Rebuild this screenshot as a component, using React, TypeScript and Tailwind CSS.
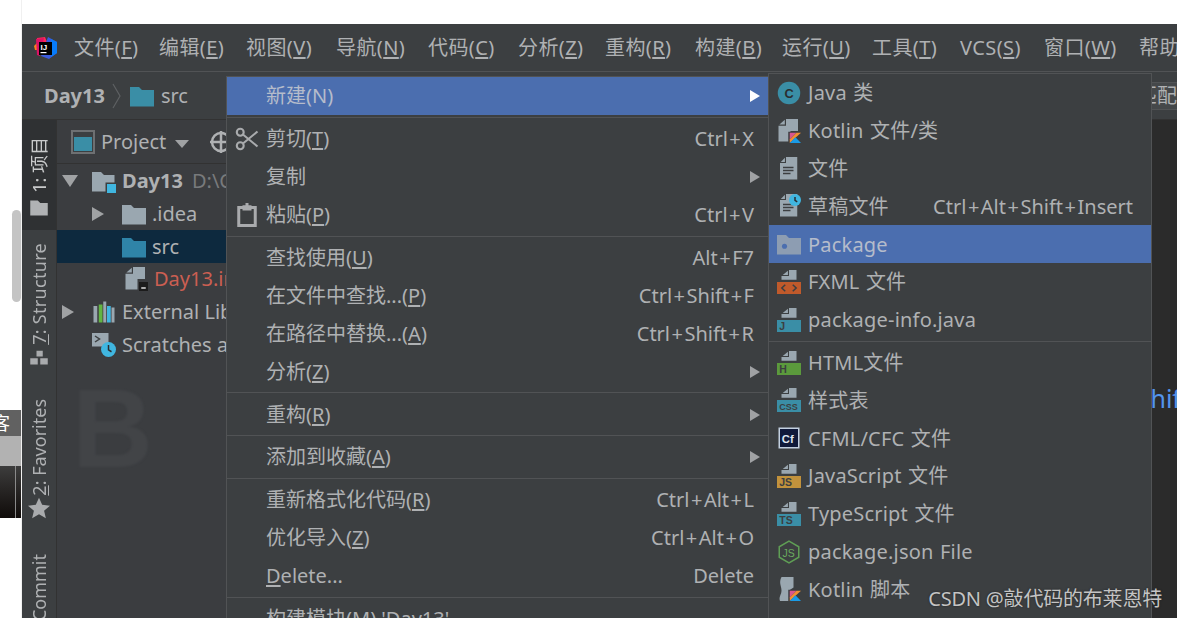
import type { ReactNode } from "react";

const FONT = "font-['Noto_Sans','Noto_Sans_CJK_SC',sans-serif]";
const GRAY = "#9aa7b0";

function Ico({ children, className = "" }: { children: ReactNode; className?: string }) {
  return (
    <svg viewBox="0 0 16 16" className={`h-6 w-6 shrink-0 ${className}`}>
      {children}
    </svg>
  );
}

const DocLines = () => (
  <>
    <path d="M6 0h7.5v15H2V4h4z" fill={GRAY} />
    <path d="M5.3 0.5v2.8H2.5z" fill={GRAY} />
    <path d="M4 6.5h7v1H4z M4 8.5h7v1H4z M4 10.5h5v1H4z" fill="#3c3f41" />
  </>
);
const SplitDoc = () => (
  <>
    <path d="M6 0h8v8H9v7H1V4.500h5z" fill={GRAY} />
    <path d="M5.200 0.500v3.200H1.600z" fill={GRAY} />
  </>
);
const KotlinBadge = () => (
  <>
    <path d="M7.500 8.500h8.500l-3.500 3.700 3.500 3.800H7.500z" fill="#3c3f41" />
    <path d="M8.500 9.200h4.500l-4.500 4.500z" fill="#d9568f" />
    <path d="M13 9.200h3l-7.500 6.800v-2.300z" fill="#f18e33" />
    <path d="M8.500 16l3.800-3.800 3.700 3.800z" fill="#1a9be6" />
  </>
);
const TypedFile = ({ color, label, size = 7 }: { color: string; label: string; size?: number }) => (
  <>
    <path d="M8 0h5v6.500H3V4h5z" fill={GRAY} />
    <path d="M7.300 0.500v2.800H3.800z" fill={GRAY} />
    <path d="M0 8h16v8H0z" fill={color} />
    <text x="1.500" y="14.700" fontSize={size} fontFamily="Liberation Sans" fontWeight="700" fill="#3c3f41">
      {label}
    </text>
  </>
);

const icons: Record<string, ReactNode> = {
  cut: (
    <Ico>
      <g fill="none" stroke="#a9abad" strokeWidth="1.400">
        <circle cx="3.500" cy="3.500" r="2.300" />
        <circle cx="3.500" cy="12.500" r="2.300" />
        <path d="M5.300 5L15 13 M5.300 11L15 3" />
      </g>
    </Ico>
  ),
  paste: (
    <Ico>
      <path d="M2.500 3h11v12h-11z" fill="none" stroke="#a9abad" strokeWidth="2" />
      <path d="M5 1.500h6V5H5z M7 0h2v2H7z" fill="#a9abad" />
    </Ico>
  ),
  java: (
    <Ico>
      <circle cx="8" cy="8" r="7.500" fill="#3a8ea6" />
      <text x="8" y="11" textAnchor="middle" fontSize="8.500" fontWeight="700" fontFamily="Liberation Sans" fill="#2b2d30">
        C
      </text>
    </Ico>
  ),
  kotlinFile: (
    <Ico>
      <SplitDoc />
      <KotlinBadge />
    </Ico>
  ),
  file: (
    <Ico>
      <DocLines />
    </Ico>
  ),
  scratch: (
    <Ico>
      <DocLines />
      <circle cx="12" cy="4" r="4" fill="#40b6e0" />
      <path d="M12 2v2.200l1.500 1" stroke="#2b2d30" strokeWidth="1" fill="none" />
    </Ico>
  ),
  pkg: (
    <Ico>
      <path d="M0 2h6l2 2h8v11H0z" fill="#8d9db2" />
      <circle cx="5" cy="9.500" r="1.700" fill="#4b6eaf" />
    </Ico>
  ),
  fxml: (
    <Ico>
      <TypedFile color="#c05a2b" label="" />
      <path d="M5.500 9.800L3.200 12l2.300 2.200 M10.500 9.800l2.300 2.200-2.300 2.200" fill="none" stroke="#3c3f41" strokeWidth="1" />
    </Ico>
  ),
  pinfo: (
    <Ico>
      <TypedFile color="#3a8ea6" label="J" />
    </Ico>
  ),
  html: (
    <Ico>
      <TypedFile color="#5b9a3c" label="H" />
    </Ico>
  ),
  css: (
    <Ico>
      <TypedFile color="#3a8ea6" label="CSS" size={6} />
    </Ico>
  ),
  cfml: (
    <Ico>
      <path d="M1 1h14v14H1z" fill="#c3d0e0" />
      <path d="M2 2h12v12H2z" fill="#101a3a" />
      <text x="3.200" y="11" fontSize="7.500" fontWeight="700" fontFamily="Liberation Sans" fill="#dfe6f0">
        Cf
      </text>
    </Ico>
  ),
  js: (
    <Ico>
      <TypedFile color="#c2923c" label="JS" />
    </Ico>
  ),
  ts: (
    <Ico>
      <TypedFile color="#3a8ea6" label="TS" />
    </Ico>
  ),
  node: (
    <Ico>
      <path d="M8 0.800l6.500 3.700v7L8 15.200 1.500 11.500v-7z" fill="none" stroke="#5f9e55" strokeWidth="1" />
      <text x="3.600" y="11" fontSize="7" fontFamily="Liberation Sans" fill="#6aab5f">
        JS
      </text>
    </Ico>
  ),
  kotlinScript: (
    <Ico>
      <path d="M3 0h8v7l-3 2v7H2c-1-3 1-4 1-7S1 4 3 0z" fill={GRAY} />
      <KotlinBadge />
    </Ico>
  ),
};

type Entry = { label: ReactNode; key?: string; arrow?: boolean; icon?: string; active?: boolean; sep?: boolean };
const M = ({ c }: { c: string }) => <u className="underline-offset-2">{c}</u>;

const mainItems: Entry[] = [
  { label: "新建(N)", arrow: true, active: true },
  { sep: true, label: "" },
  { label: <>剪切(<M c="T" />)</>, key: "Ctrl+X", icon: "cut" },
  { label: "复制", arrow: true },
  { label: <>粘贴(<M c="P" />)</>, key: "Ctrl+V", icon: "paste" },
  { sep: true, label: "" },
  { label: <>查找使用(<M c="U" />)</>, key: "Alt+F7" },
  { label: <>在文件中查找...(<M c="P" />)</>, key: "Ctrl+Shift+F" },
  { label: <>在路径中替换...(<M c="A" />)</>, key: "Ctrl+Shift+R" },
  { label: <>分析(<M c="Z" />)</>, arrow: true },
  { sep: true, label: "" },
  { label: <>重构(<M c="R" />)</>, arrow: true },
  { sep: true, label: "" },
  { label: <>添加到收藏(<M c="A" />)</>, arrow: true },
  { sep: true, label: "" },
  { label: <>重新格式化代码(<M c="R" />)</>, key: "Ctrl+Alt+L" },
  { label: <>优化导入(<M c="Z" />)</>, key: "Ctrl+Alt+O" },
  { label: <><M c="D" />elete...</>, key: "Delete" },
  { sep: true, label: "" },
  { label: "构建模块(M) 'Day13'" },
];

const subItems: Entry[] = [
  { label: "Java 类", icon: "java" },
  { label: "Kotlin 文件/类", icon: "kotlinFile" },
  { label: "文件", icon: "file" },
  { label: "草稿文件", icon: "scratch", key: "Ctrl+Alt+Shift+Insert" },
  { label: "Package", icon: "pkg", active: true },
  { label: "FXML 文件", icon: "fxml" },
  { label: "package-info.java", icon: "pinfo" },
  { sep: true, label: "" },
  { label: "HTML文件", icon: "html" },
  { label: "样式表", icon: "css" },
  { label: "CFML/CFC 文件", icon: "cfml" },
  { label: "JavaScript 文件", icon: "js" },
  { label: "TypeScript 文件", icon: "ts" },
  { label: "package.json File", icon: "node" },
  { label: "Kotlin 脚本", icon: "kotlinScript" },
];

const Arrow = ({ active }: { active?: boolean }) => (
  <span
    className={`h-0 w-0 border-y-[6px] border-l-[10px] border-y-transparent ${
      active ? "border-l-white" : "border-l-[#a0a2a4]"
    }`}
  />
);

// the + in shortcuts is wider in the reference font
function Shortcut({ value }: { value: string }) {
  const parts = value.split("+");
  return (
    <span className="whitespace-nowrap">
      {parts.map((p, i) => (
        <span key={i}>
          {i > 0 && <span className="mx-[1.500px]">+</span>}
          {p}
        </span>
      ))}
    </span>
  );
}

function MenuRow({ item }: { item: Entry }) {
  if (item.sep) return <div className="my-[2px] h-px shrink-0 bg-[#515355]" />;
  return (
    <div
      className={`relative flex h-[37.900px] shrink-0 items-center justify-between pl-[39px] pr-[8px] pt-[1px] ${
        item.active ? "bg-[#4b6eaf] text-[#b5bccb]" : ""
      }`}
    >
      {item.icon && <span className="absolute left-[8px] top-[7px]">{icons[item.icon]}</span>}
      <span className="whitespace-nowrap">{item.label}</span>
      {item.key && <span className="pr-[6px]"><Shortcut value={item.key} /></span>}
      {item.arrow && <Arrow active={item.active} />}
    </div>
  );
}

function SubRow({ item }: { item: Entry }) {
  if (item.sep) return <div className="my-[2px] h-px shrink-0 bg-[#515355]" />;
  return (
    <div
      className={`relative flex h-[37.800px] shrink-0 items-center justify-between pl-[39px] pr-[18px] pt-[1px] ${
        item.active ? "bg-[#4b6eaf] text-[#b5bccb]" : ""
      }`}
    >
      <span className="absolute left-[8px] top-[7px]">{item.icon && icons[item.icon]}</span>
      <span className="whitespace-nowrap tracking-[0.2px] [word-spacing:1px]">{item.label}</span>
      {item.key && <Shortcut value={item.key} />}
    </div>
  );
}

const topMenu: [string, string, number][] = [
  ["文件", "F", 85],
  ["编辑", "E", 87],
  ["视图", "V", 90],
  ["导航", "N", 92],
  ["代码", "C", 90],
  ["分析", "Z", 87],
  ["重构", "R", 90],
  ["构建", "B", 87],
  ["运行", "U", 90],
  ["工具", "T", 88],
  ["VCS", "S", 84],
  ["窗口", "W", 95],
];

const Tri = ({ className = "" }: { className?: string }) => (
  <span className={`h-0 w-0 border-y-[7px] border-l-[12px] border-y-transparent border-l-[#a0a2a4] ${className}`} />
);

function TreeRow({ pad, arrow, icon, children, selected }: { pad: number; arrow?: ReactNode; icon: ReactNode; children: ReactNode; selected?: boolean }) {
  return (
    <div className={`relative flex h-[32.700px] items-center whitespace-nowrap ${selected ? "bg-[#0d293e]" : ""}`}>
      {arrow && <span className="absolute top-1/2 flex -translate-y-1/2" style={{ left: pad - 30 }}>{arrow}</span>}
      <span className="shrink-0" style={{ marginLeft: pad }}>{icon}</span>
      <span className="ml-[6px]">{children}</span>
    </div>
  );
}

const Folder = ({ color }: { color: string }) => (
  <Ico>
    <path d="M0 2h6l2 2h8v11H0z" fill={color} />
  </Ico>
);

function VTab({ children, className = "" }: { children: ReactNode; className?: string }) {
  return (
    <span className={`rotate-180 whitespace-nowrap text-[18px] [text-orientation:sideways] [writing-mode:vertical-rl] ${className}`}>
      {children}
    </span>
  );
}

export default function App() {
  return (
    <div className={`flex h-[618px] w-[1177px] overflow-hidden bg-white text-[20px] leading-none text-[#afb1b3] ${FONT}`}>
      {/* bits of the browser page behind the IDE window */}
      <div className="flex w-[22px] shrink-0 flex-col border-r border-[#f0f0f0]">
        <div className="ml-[12px] mt-[210px] h-[92px] w-[9px] rounded-full bg-[#c4c4c4]" />
        <div className="mt-[108px] flex h-[26px] items-center overflow-hidden bg-[#616161] text-[18px] text-white">
          <span className="-ml-[8px]">客</span>
        </div>
        <div className="h-[30px] bg-[#b2b2b2]" />
        <div className="flex h-[52px] justify-end bg-gradient-to-b from-[#3d3d3d] to-[#100c0a] pr-[5px]">
          <div className="h-full w-px bg-[#8a8a8a]" />
        </div>
      </div>

      <div className="relative mt-[24px] flex min-w-0 flex-1 flex-col overflow-hidden bg-[#3c3f41]">
        {/* menu bar */}
        <div className="flex h-[48px] shrink-0 items-center border-b border-[#515355] pl-[11px]">
          <svg viewBox="0 0 24 24" className="h-6 w-6 shrink-0">
            <path d="M4 2l8-1 2 5H4z" fill="#fe2857" />
            <path d="M1 10l3-3 1 7H2z" fill="#fc801d" />
            <path d="M3 3l8-1-4 18-3-1z" fill="#dd1265" />
            <path d="M15 1l9 5v11l-8 6-8-3z" fill="#3b5bdb" />
            <path d="M18 3l6 3v11l-6 4z" fill="#087cfa" />
            <path d="M6 6h13v13H6z" fill="#000" />
            <text x="7.500" y="13.500" fontSize="8" fontWeight="700" fontFamily="Liberation Sans" fill="#fff">IJ</text>
            <path d="M7.500 16h6v1.200h-6z" fill="#fff" />
          </svg>
          <div className="ml-[17px] flex whitespace-nowrap">
            {topMenu.map(([t, k, w]) => (
              <span key={k + t} className="shrink-0 tracking-[0.4px]" style={{ width: w }}>
                {t}(<M c={k} />)
              </span>
            ))}
            <span className="shrink-0 tracking-[0.4px]">帮助(H)</span>
          </div>
        </div>

        {/* navigation bar */}
        <div className="flex h-[48px] shrink-0 items-center justify-between border-b border-[#323232] pl-[22px]">
          <div className="flex items-center">
            <span className="font-bold">Day13</span>
            <svg viewBox="0 0 10 26" className="ml-[7px] h-[26px] w-[10px]">
              <path d="M1 1l7 12-7 12" fill="none" stroke="#5e6163" strokeWidth="1.200" />
            </svg>
            <span className="ml-[8px]"><Folder color="#3a8ea6" /></span>
            <span className="ml-[7px]">src</span>
          </div>
          <span className="border-y border-l border-[#515355] bg-[#45484a] py-[3px]">匹配</span>
        </div>

        <div className="flex min-h-0 flex-1">
          {/* tool window strip */}
          <div className="flex w-[35px] shrink-0 flex-col items-center border-r border-[#323232]">
            <div className="flex h-[110px] w-full shrink-0 flex-col items-center bg-[#2f3133] pt-[17px] text-[#c8c9ca]">
              <VTab>1: 项目</VTab>
              <svg viewBox="0 0 16 16" className="mt-[5px] h-[20px] w-[20px] shrink-0">
                <path d="M1 2h6l2 2h6v10H1z" fill="#b0b2b4" />
              </svg>
            </div>
            <VTab className="mt-[13px] tracking-[0.3px]"><M c="7" />: Structure</VTab>
            <svg viewBox="0 0 16 16" className="mt-[2px] h-[20px] w-[20px] shrink-0">
              <path d="M6 3h5v4.500H6z M1 9h6v5H1z M9 9h6v5H9z" fill="#a9abad" />
            </svg>
            <VTab className="mt-[32px]"><M c="2" />: Favorites</VTab>
            <svg viewBox="0 0 16 16" className="mt-[2px] h-[22px] w-[22px] shrink-0">
              <path d="M8 0.500l2.300 5.200 5.700.6-4.300 3.700 1.300 5.500L8 12.600 3 15.500l1.300-5.500L0 6.300l5.700-.6z" fill="#a9abad" />
            </svg>
            <VTab className="mt-[35px]">Commit</VTab>
          </div>

          {/* project panel */}
          <div className="relative w-[169px] shrink-0 overflow-hidden bg-[#3b3d40]">
            <span className="absolute left-[15px] top-[253px] font-['Liberation_Sans'] text-[112px] font-bold text-[#424447] blur-[1px]">B</span>
            <div className="relative flex h-[44px] items-center border-b border-[#323232] pl-[14px] pt-[1px]">
              <svg viewBox="0 0 24 24" className="h-6 w-6 shrink-0">
                <path d="M0 0h24v24H0z" fill="#6e7072" />
                <path d="M2 2h20v20H2z" fill="#3c3f41" />
                <path d="M3 7h18v14H3z" fill="#3a8ea6" />
              </svg>
              <span className="ml-[6px]">Project</span>
              <span className="ml-[9px] mt-[3px] h-0 w-0 border-x-[7px] border-t-[8px] border-x-transparent border-t-[#a0a2a4]" />
              <svg viewBox="0 0 24 24" className="ml-[20px] h-6 w-6 shrink-0">
                <circle cx="12" cy="12" r="9" fill="none" stroke="#afb1b3" strokeWidth="2.500" />
                <path d="M12 1v22 M1 12h22" stroke="#afb1b3" strokeWidth="2.500" />
              </svg>
            </div>
            <div className="relative pt-[1px]">
              <TreeRow pad={35} arrow={<span className="h-0 w-0 border-x-[8px] border-t-[12px] border-x-transparent border-t-[#a0a2a4]" />} icon={
                <Ico>
                  <path d="M0 2h6l2 2h7v11H0z" fill={GRAY} />
                  <path d="M9 9h7v7H9z" fill="#3c3f41" />
                  <path d="M10 10h6v6h-6z" fill="#40b6e0" />
                </Ico>
              }>
                <span className="font-bold">Day13</span>
                <span className="ml-[9px] text-[#787a7c]">D:\C</span>
              </TreeRow>
              <TreeRow pad={65} arrow={<Tri />} icon={<Folder color={GRAY} />}>.idea</TreeRow>
              <TreeRow pad={65} selected icon={<Folder color="#2f84a8" />}>src</TreeRow>
              <TreeRow pad={67} icon={
                <Ico>
                  <SplitDoc />
                  <path d="M10 10h6v6h-6z" fill="#1c1c1c" />
                  <path d="M11.500 13.500h3v1h-3z" fill="#ddd" />
                </Ico>
              }>
                <span className="text-[#cc5f52]">Day13.iml</span>
              </TreeRow>
              <TreeRow pad={35} arrow={<Tri />} icon={
                <Ico>
                  <path d="M1 4h2.500v11H1z M13 5h2v10h-2z" fill={GRAY} />
                  <path d="M4.500 3h2.500v12H4.500z" fill="#62b543" />
                  <path d="M7.500 1h2v14h-2z" fill={GRAY} />
                  <path d="M10 4h2.500v11H10z" fill="#40b6e0" />
                </Ico>
              }>External Libraries</TreeRow>
              <TreeRow pad={35} icon={
                <Ico>
                  <path d="M0 0h11v9H0z" fill={GRAY} />
                  <path d="M2 2l3 2-3 2" fill="none" stroke="#3c3f41" strokeWidth="1" />
                  <circle cx="11" cy="11" r="5" fill="#40b6e0" />
                  <path d="M11 8v3.300l2 1.200" fill="none" stroke="#2b2d30" strokeWidth="1" />
                </Ico>
              }>Scratches and Consoles</TreeRow>
            </div>
          </div>

          {/* editor, nearly all of it behind the menus */}
          <div className="flex min-w-0 flex-1 flex-col items-end overflow-hidden bg-[#2b2b2b] pt-[266px] text-[#5394ec]">
            <span className="-mr-[13px] text-[25px]">Shift</span>
          </div>
        </div>

        {/* context menu */}
        <div className="absolute left-[204px] top-[52px] flex h-[600px] w-[543px] flex-col border border-[#515355] bg-[#3c3f41]">
          {mainItems.map((item, i) => (
            <MenuRow key={i} item={item} />
          ))}
        </div>

        {/* 新建 submenu */}
        <div className="absolute left-[746px] top-[49px] flex h-[600px] w-[384px] flex-col border border-[#515355] bg-[#3c3f41]">
          {subItems.map((item, i) => (
            <SubRow key={i} item={item} />
          ))}
        </div>

        <span className="absolute right-[15px] top-[565px] text-[20px] tracking-[-0.2px] text-[#c4c4c4] [text-shadow:0_0_2px_#222]">
          CSDN @敲代码的布莱恩特
        </span>
      </div>
    </div>
  );
}
